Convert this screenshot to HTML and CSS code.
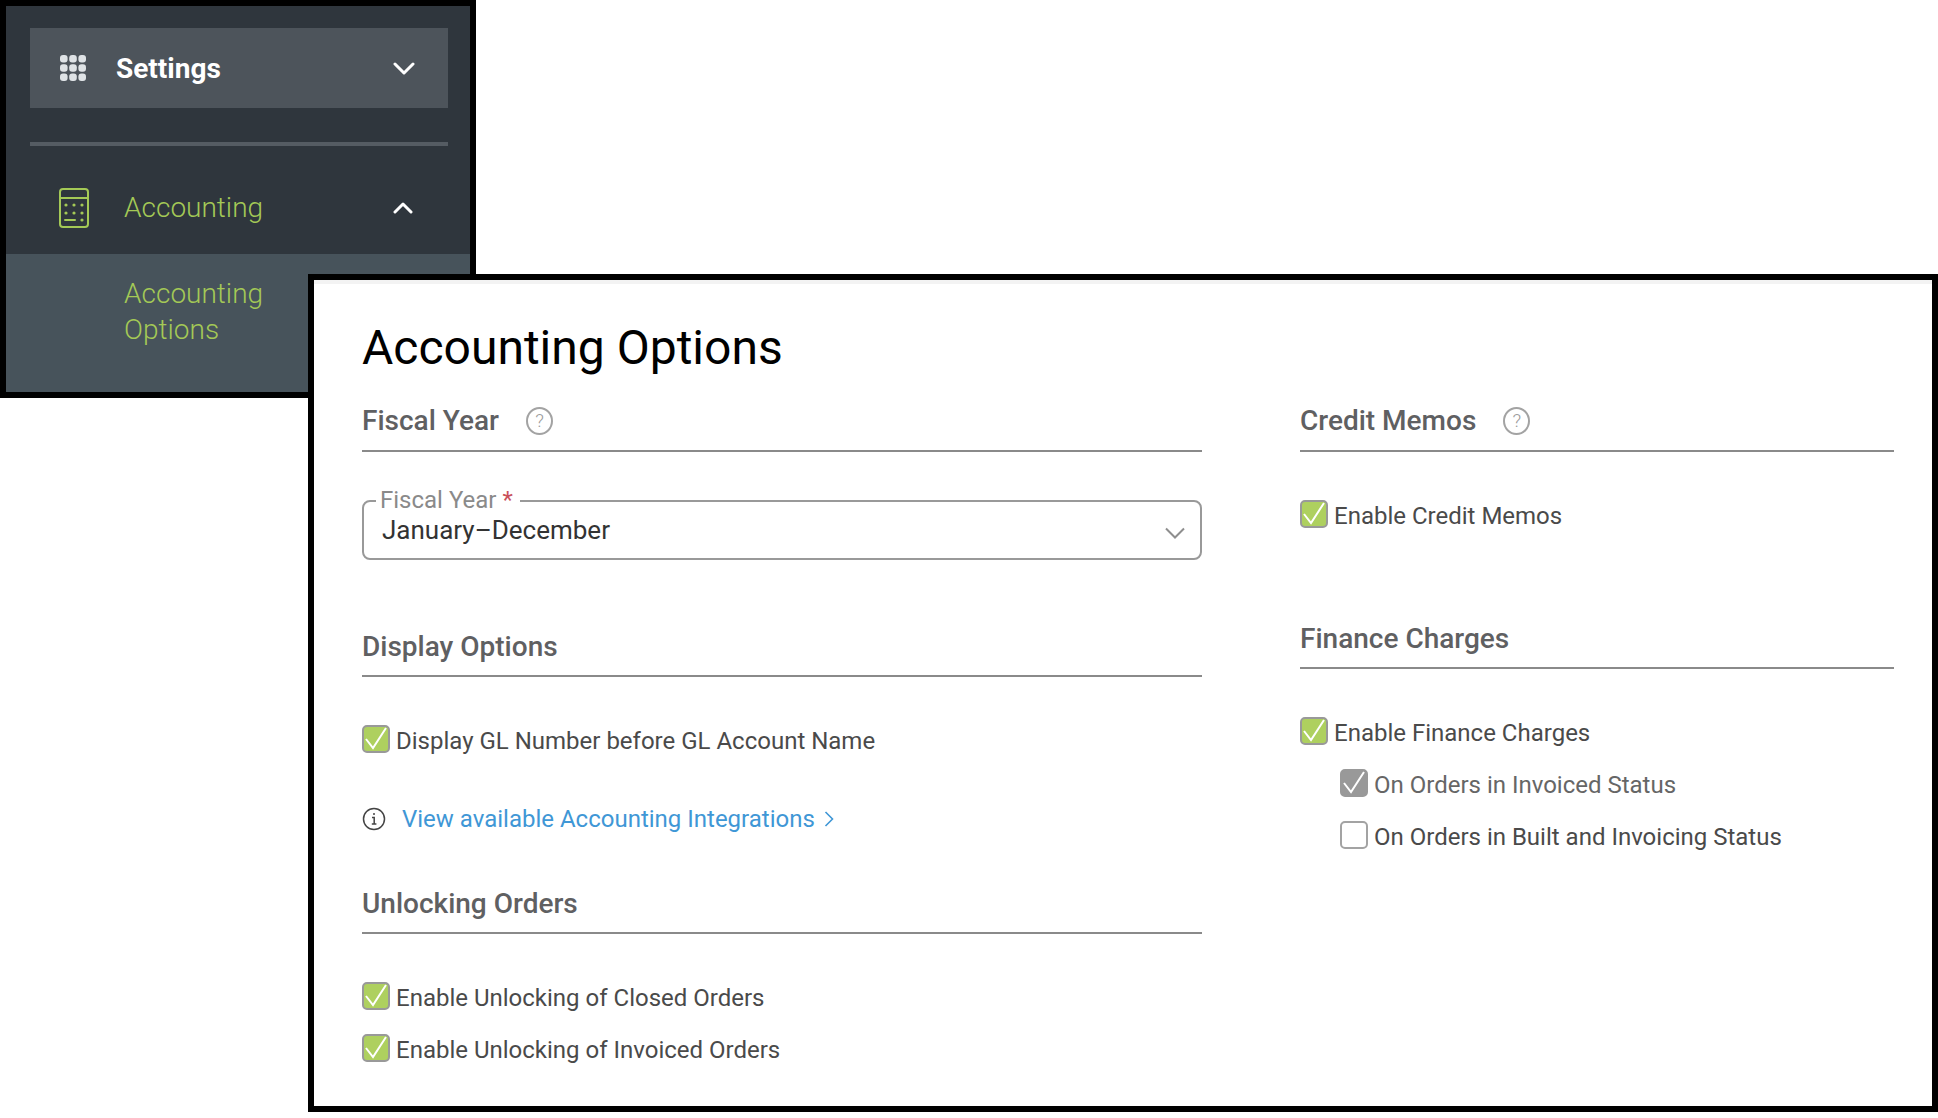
FILE: index.html
```html
<!DOCTYPE html>
<html lang="en">
<head>
<meta charset="utf-8">
<title>Accounting Options</title>
<link rel="stylesheet" href="styles.css">
</head>
<body>
<div class="stage">
  <nav class="sidebar">
    <div class="settings-bar">
      <svg class="grid-icon" width="26" height="26" viewBox="0 0 26 26" fill="#dfe3e6"><rect x="0" y="0" width="7.6" height="7.6" rx="3"/><rect x="9.2" y="0" width="7.6" height="7.6" rx="3"/><rect x="18.4" y="0" width="7.6" height="7.6" rx="3"/><rect x="0" y="9.2" width="7.6" height="7.6" rx="3"/><rect x="9.2" y="9.2" width="7.6" height="7.6" rx="3"/><rect x="18.4" y="9.2" width="7.6" height="7.6" rx="3"/><rect x="0" y="18.4" width="7.6" height="7.6" rx="3"/><rect x="9.2" y="18.4" width="7.6" height="7.6" rx="3"/><rect x="18.4" y="18.4" width="7.6" height="7.6" rx="3"/></svg>
      <span class="settings-label">Settings</span>
      <svg class="chev chev-down" width="22" height="14" viewBox="0 0 22 14" fill="none" stroke="#fff" stroke-width="3" stroke-linecap="round" stroke-linejoin="round"><path d="M2 2l9 9 9-9"/></svg>
    </div>
    <div class="divider"></div>
    <div class="accounting-row">
      <svg class="calc-icon" width="30" height="40" viewBox="0 0 30 40" fill="none" stroke="#a4c956" stroke-width="2"><rect x="1" y="1" width="28" height="38" rx="3"/><path d="M1 10h28"/><path d="M6 32h10" stroke-linecap="round"/><g fill="#a4c956" stroke="none"><circle cx="7" cy="17" r="1.6"/><circle cx="15" cy="17" r="1.6"/><circle cx="23" cy="17" r="1.6"/><circle cx="7" cy="25" r="1.6"/><circle cx="15" cy="25" r="1.6"/><circle cx="23" cy="25" r="1.6"/><circle cx="23" cy="32" r="1.6"/></g></svg>
      <span class="accounting-label">Accounting</span>
      <svg class="chev" width="22" height="12" viewBox="0 0 22 12" fill="none" stroke="#fff" stroke-width="3" stroke-linecap="round" stroke-linejoin="round"><path d="M3 10l8-8 8 8"/></svg>
    </div>
    <div class="submenu"><a class="sub-link">Accounting Options</a></div>
  </nav>

  <main class="panel">
    <h1 class="title">Accounting Options</h1>
    <div class="columns">
      <div class="col">
        <section class="sec-fiscal">
          <h2 class="sec-head">Fiscal Year <span class="help">?</span></h2>
          <fieldset class="select">
            <legend class="select-legend">Fiscal Year <span class="req">*</span></legend>
            <span class="select-value">January–December</span>
            <svg class="select-chev" width="20" height="12" viewBox="0 0 20 12" fill="none" stroke="#8e8e8e" stroke-width="2"><path d="M1 1.5l9 9 9-9"/></svg>
          </fieldset>
        </section>
        <section class="sec-display">
          <h2 class="sec-head">Display Options</h2>
          <label class="check-row"><span class="box on"><svg width="24" height="24" viewBox="0 0 24 24"><path class="tick" d="M2 12l7 9L22 1"/></svg></span>Display GL Number before GL Account Name</label>
          <div class="info-row">
            <svg width="24" height="24" viewBox="0 0 24 24" fill="none" stroke="#444" stroke-width="1.5"><circle cx="12" cy="12" r="10.5"/><path d="M10 10.5h2.2V17M9.8 17h4.6"/><circle cx="12" cy="7" r="1" fill="#444" stroke="none"/></svg>
            <a class="link">View available Accounting Integrations</a>
            <svg width="10" height="18" viewBox="0 0 10 18" fill="none" stroke="#3f97d6" stroke-width="1.6"><path d="M1.5 2l7 7-7 7"/></svg>
          </div>
        </section>
        <section class="sec-unlock">
          <h2 class="sec-head">Unlocking Orders</h2>
          <label class="check-row"><span class="box on"><svg width="24" height="24" viewBox="0 0 24 24"><path class="tick" d="M2 12l7 9L22 1"/></svg></span>Enable Unlocking of Closed Orders</label>
          <label class="check-row"><span class="box on"><svg width="24" height="24" viewBox="0 0 24 24"><path class="tick" d="M2 12l7 9L22 1"/></svg></span>Enable Unlocking of Invoiced Orders</label>
        </section>
      </div>
      <div class="col">
        <section class="sec-credit">
          <h2 class="sec-head">Credit Memos <span class="help">?</span></h2>
          <label class="check-row"><span class="box on"><svg width="24" height="24" viewBox="0 0 24 24"><path class="tick" d="M2 12l7 9L22 1"/></svg></span>Enable Credit Memos</label>
        </section>
        <section class="sec-finance">
          <h2 class="sec-head">Finance Charges</h2>
          <label class="check-row"><span class="box on"><svg width="24" height="24" viewBox="0 0 24 24"><path class="tick" d="M2 12l7 9L22 1"/></svg></span>Enable Finance Charges</label>
          <label class="check-row nested muted"><span class="box disabled"><svg width="24" height="24" viewBox="0 0 24 24"><path class="tick" d="M2 12l7 9L22 1"/></svg></span>On Orders in Invoiced Status</label>
          <label class="check-row nested"><span class="box"></span>On Orders in Built and Invoicing Status</label>
        </section>
      </div>
    </div>
  </main>
</div>
</body>
</html>
```
FILE: styles.css
```css
* { box-sizing: border-box; }
html, body { margin: 0; padding: 0; background: #fff; }
body { font-family: Roboto, "Liberation Sans", sans-serif; }
.stage { position: relative; width: 1938px; height: 1118px; overflow: hidden; }

/* Sidebar */
.sidebar { width: 476px; height: 398px; border: 6px solid #000; background: #2f363d; padding-top: 22px; }
.settings-bar { display: flex; align-items: center; height: 80px; margin: 0 22px 0 24px; padding-left: 30px; background: #4d545b; }
.settings-label { margin-left: 30px; font-size: 28px; font-weight: 700; color: #fff; flex: 1; }
.chev { display: block; }
.settings-bar .chev { margin-right: 33px; }
.chev-down { margin-top: 2px; }
.divider { height: 4px; margin: 34px 22px 0 24px; background: #555c63; }
.accounting-row { display: flex; align-items: center; height: 108px; padding: 15px 56px 0 53px; }
.accounting-label { margin-left: 35px; flex: 1; font-size: 28px; font-weight: 300; color: #a4c956; }
.submenu { height: 138px; background: #47535b; padding: 22px 0 0 118px; }
.sub-link { display: block; width: 160px; font-size: 28px; line-height: 36px; font-weight: 300; color: #a4c956; }

/* Panel */
.panel { position: absolute; left: 308px; top: 274px; width: 1630px; height: 838px; border: 6px solid #000; background: #fff; padding: 0 38px 0 48px; }
.panel::before { content: ""; display: block; height: 4px; margin: 0 -38px 0 -48px; background: #f3f3f3; }
.title { margin: 36px 0 0; font-size: 48px; line-height: 56px; font-weight: 400; color: #000; }
.columns { display: grid; grid-template-columns: 840px 594px; column-gap: 98px; }
.col { min-width: 0; }
.sec-head { display: flex; align-items: center; height: 49px; margin: 0; padding: 2px 0 12px; font-size: 28px; line-height: 33px; font-weight: 500; color: #5f6062; border-bottom: 2px solid #8a8a8a; }
.sec-fiscal, .sec-credit { margin-top: 27px; }
.sec-fiscal .sec-head, .sec-credit .sec-head { padding: 1px 0 13px; }
.help { display: flex; align-items: center; justify-content: center; width: 27px; height: 28px; margin-left: 27px; border: 2px solid #a3a3a3; border-radius: 50%; font-size: 19px; font-weight: 300; color: #9a9a9a; }

/* Select */
.select { position: relative; display: block; height: 71px; margin: 37px 0 0; padding: 0 16px; border: 2px solid #999; border-radius: 8px; min-width: 0; }
.select-legend { padding: 0 7px 2px 4px; margin-left: -4px; font-size: 24px; line-height: 22px; color: #8a8a8a; }
.req { color: #c9505a; }
.select-value { display: block; margin: 1px 0 0 2px; font-size: 26px; line-height: 32px; color: #333; }
.select-chev { position: absolute; right: 15px; top: 14px; }

/* Check rows */
.check-row { display: flex; align-items: center; gap: 6px; height: 52px; padding-top: 2px; font-size: 24px; color: #4a4a4a; }
.check-row.nested { padding-left: 40px; }
.check-row.muted { color: #666; }
.box { flex: none; display: block; width: 28px; height: 28px; margin-bottom: 4px; border: 2px solid #a3a3a3; border-radius: 5px; background: #fff; }
.box svg { display: block; }
.box.on { background: #aed05f; border-color: #999; }
.box.disabled { background: #999; border-color: #999; }
.tick { fill: none; stroke: #fff; stroke-width: 2; }

.sec-display { margin-top: 68px; }
.sec-display .sec-head, .sec-unlock .sec-head, .sec-credit .sec-head, .sec-finance .sec-head { margin-bottom: 37px; }
.info-row { display: flex; align-items: center; gap: 16px; height: 52px; margin-top: 27px; }
.link { font-size: 24px; color: #3f97d6; margin-right: -7px; }
.sec-unlock { margin-top: 40px; }
.sec-finance { margin-top: 79px; }
```
